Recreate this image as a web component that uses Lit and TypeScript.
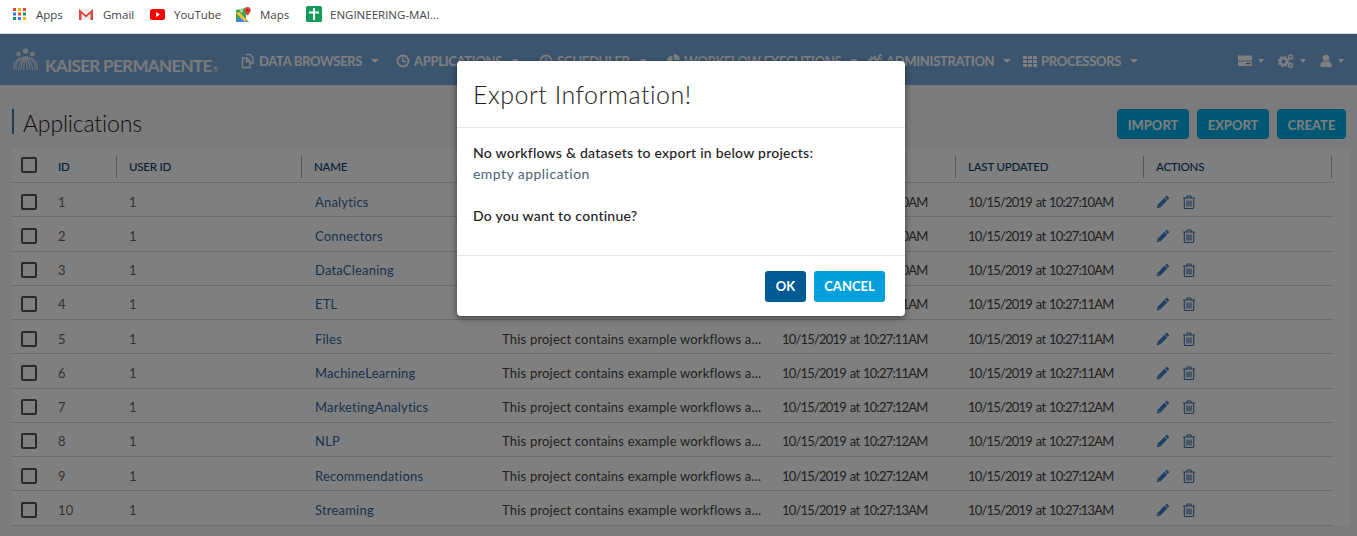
import { LitElement, html, css, svg } from 'lit';
import { customElement } from 'lit/decorators.js';

const caret = html`<span class="caret"></span>`;

const navIcons: Record<string, unknown> = {
  copy: svg`<path d="M5 1.500h4l3 3v6H9M1.500 5h4.500l3 3v6.500H1.500zM5.500 5.500v3h3" fill="none" stroke="currentColor" stroke-width="1.400"/>`,
  clock: svg`<circle cx="7" cy="8" r="5.500" fill="none" stroke="currentColor" stroke-width="1.800"/><path d="M7 4.500v4h3" fill="none" stroke="currentColor" stroke-width="1.500"/>`,
  pie: svg`<path d="M6.500 2.500a6 6 0 1 0 6 6h-6zM8 1a6 6 0 0 1 6 6H8z" fill="currentColor"/>`,
  cogs: svg`<circle cx="5.500" cy="8.500" r="3.400" fill="none" stroke="currentColor" stroke-width="2.400"/><circle cx="5.500" cy="8.500" r="5" fill="none" stroke="currentColor" stroke-width="1.600" stroke-dasharray="2 1.930"/><circle cx="12.700" cy="4" r="1.900" fill="none" stroke="currentColor" stroke-width="1.500"/><circle cx="12.700" cy="12.500" r="1.900" fill="none" stroke="currentColor" stroke-width="1.500"/>`,
  grid: svg`<path d="M0 3h4v3H0zM5 3h4v3H5zM10 3h4v3h-4zM0 7h4v3H0zM5 7h4v3H5zM10 7h4v3h-4zM0 11h4v3H0zM5 11h4v3H5zM10 11h4v3h-4z" fill="currentColor"/>`,
  server: svg`<path d="M0 2.500h14v5H0zM0 8.500h14v4.500H0z" fill="currentColor"/><path d="M8 10.700h4.500" stroke="#3c556f" stroke-width="1"/>`,
  user: svg`<circle cx="6" cy="5" r="3.300" fill="currentColor"/><path d="M.5 14v-2.500c0-2 1.500-3 3-3h5c1.500 0 3 1 3 3V14z" fill="currentColor"/>`,
};

const navItems = [
  { icon: 'copy', label: 'DATA BROWSERS', width: 155 },
  { icon: 'clock', label: 'APPLICATIONS', width: 143 },
  { icon: 'clock', label: 'SCHEDULER', width: 127 },
  { icon: 'pie', label: 'WORKFLOW EXECUTIONS', width: 202 },
  { icon: 'cogs', label: 'ADMINISTRATION', width: 155 },
  { icon: 'grid', label: 'PROCESSORS', width: 112 },
];

const rows = [
  ['1', 'Analytics', '10'],
  ['2', 'Connectors', '10'],
  ['3', 'DataCleaning', '10'],
  ['4', 'ETL', '11'],
  ['5', 'Files', '11'],
  ['6', 'MachineLearning', '11'],
  ['7', 'MarketingAnalytics', '12'],
  ['8', 'NLP', '12'],
  ['9', 'Recommendations', '12'],
  ['10', 'Streaming', '13'],
];

const pencil = html`<svg class="act" viewBox="0 0 14 14" width="14" height="14"><path d="M10.700.6l2.700 2.700-1.600 1.600-2.700-2.700zM8.500 2.800l2.700 2.700-6.900 6.900-3.500 1 .8-3.700z" fill="#3a80c8"/><path d="M1.500 10.300l2.300 2.300" stroke="#b8c8d8" stroke-width="1"/></svg>`;
const trash = html`<svg class="act" viewBox="0 0 14 14" width="14" height="14"><path d="M1 3h12M4.500 3l.8-2h3.400l.8 2M2.300 3v9.200c0 .8.500 1.300 1.200 1.300h7c.7 0 1.200-.5 1.200-1.300V3M5 5.500v6M7 5.500v6M9 5.500v6" fill="none" stroke="#3a70a8" stroke-width="1.100"/></svg>`;

@customElement('app-root')
export class AppRoot extends LitElement {
  static styles = css`
    :host {
      display: block;
      height: 536px;
      overflow: hidden;
      font-family: Lato, "Liberation Sans", sans-serif;
      color: #333;
      background: #fff;
    }
    .bookmarks {
      height: 34px;
      box-sizing: border-box;
      display: flex;
      align-items: center;
      padding: 0 0 5px 13px;
      font: 11.500px "Open Sans", sans-serif;
      color: #444;
      border-bottom: 1px solid #d8d8d8;
      background: #fff;
    }
    .bm {
      display: flex;
      align-items: center;
      gap: 9px;
      flex: none;
    }
    .bm svg { display: block; flex: none; }
    .app {
      position: relative;
      background: #f6f6f6;
      height: 502px;
      overflow: hidden;
    }
    .nav {
      height: 51px;
      display: flex;
      align-items: center;
      background: #78aade;
      color: #fff;
      padding-left: 13px;
      box-sizing: border-box;
    }
    .logo {
      display: flex;
      align-items: center;
      width: 228px;
      flex: none;
      gap: 7px;
      font-size: 17px;
      letter-spacing: -0.650px;
      font-weight: 700;
      color: #f4f4f4;
    }
    .logo span { margin-top: 11px; white-space: nowrap; }
    .logo sup { font-size: 7px; font-weight: 400; vertical-align: baseline; margin-left: 1px; }
    .item {
      display: flex;
      align-items: center;
      flex: none;
      padding-top: 2px;
      box-sizing: border-box;
      font-size: 13px;
      letter-spacing: -0.300px;
      font-weight: 700;
      white-space: nowrap;
    }
    .item svg { margin-right: 4px; flex: none; }
    .caret {
      display: inline-block;
      width: 0;
      height: 0;
      margin-left: 9px;
      border-left: 4px solid transparent;
      border-right: 4px solid transparent;
      border-top: 4px solid currentColor;
    }
    .right {
      margin-left: auto;
      display: flex;
      align-items: center;
      gap: 14px;
      padding: 2px 13px 0 0;
    }
    .right div { display: flex; align-items: center; }
    .right .caret { margin-left: 6px; border-left-width: 3.500px; border-right-width: 3.500px; }
    .head {
      display: flex;
      align-items: flex-start;
      justify-content: space-between;
      padding: 24px 11px 9px 12px;
      height: 30px;
    }
    .title {
      border-left: 2px solid #3a78b8;
      padding-left: 9px;
      height: 25px;
      line-height: 28px;
      font-size: 23px;
      letter-spacing: -0.150px;
      font-weight: 300;
      color: #222;
    }
    .btns { display: flex; gap: 8px; }
    .btn {
      border: 0;
      border-radius: 4px;
      height: 30px;
      padding: 1px 0 0;
      color: #fff;
      background: #00aee8;
      font: 700 13px Lato, sans-serif;
    }
    .panel {
      margin: 0 7px 0 12px;
      background: #fff;
    }
    .tr {
      display: grid;
      grid-template-columns: 105px 185px 188px 280px 186px 188px 188px;
      height: 34.250px;
      padding-top: 4px;
      box-sizing: border-box;
      align-items: center;
      border-bottom: 1px solid #d8d8d8;
      margin-right: 16px;
      font-size: 13px;
      letter-spacing: 0.200px;
      color: #666;
    }
    .tr > div { padding-left: 12px; white-space: nowrap; overflow: hidden; }
    .tr.th {
      height: 35px;
      padding-top: 3px;
      font-size: 11.500px;
      font-weight: 500;
      letter-spacing: -0.200px;
      color: #0c3c6e;
    }
    .tr.th > div {
      height: 22px;
      line-height: 22px;
      border-right: 1px solid #aaa;
      box-sizing: border-box;
    }
    .tr > .cb-cell {
      display: flex;
      align-items: center;
      gap: 21px;
      padding-left: 9px;
      overflow: visible;
    }
    .cb {
      width: 16px;
      height: 16px;
      flex: none;
      border: 2px solid #555;
      border-radius: 2px;
      box-sizing: border-box;
    }
    .th .cb { margin-top: -4px; }
    .tr > .link { color: #336699; padding-left: 13px; }
    .dark { color: #444; }
    .date { letter-spacing: -0.800px; word-spacing: 1.200px; }
    .actions { display: flex; gap: 12px; align-items: center; }
    .act { display: block; }
    .backdrop {
      position: absolute;
      inset: 0;
      background: rgba(0, 0, 0, 0.5);
    }
    .modal {
      position: absolute;
      left: 457px;
      top: 27px;
      width: 448px;
      height: 255px;
      background: #fff;
      border-radius: 4px;
      box-shadow: 0 2px 6px rgba(0, 0, 0, 0.5);
      display: flex;
      flex-direction: column;
    }
    .mhead {
      height: 67px;
      box-sizing: border-box;
      border-bottom: 1px solid #e5e5e5;
      padding: 0 16px;
      display: flex;
      align-items: center;
      font-size: 25px;
      font-weight: 300;
      letter-spacing: 0.500px;
      color: #222;
    }
    .mbody {
      flex: 1;
      padding: 14px 16px 0;
      font-size: 14px;
      color: #222;
    }
    .mbody p { margin: 0; line-height: 21px; }
    .mbody .strong { font-weight: 500; letter-spacing: 0.250px; }
    .mbody .sub { color: #4a5f78; letter-spacing: 0.450px; margin-bottom: 21px; }
    .mfoot {
      height: 61px;
      box-sizing: border-box;
      border-top: 1px solid #e5e5e5;
      display: flex;
      justify-content: flex-end;
      align-items: center;
      gap: 8px;
      padding: 0 20px 0 0;
    }
    .ok, .cancel {
      border: 0;
      border-radius: 3px;
      height: 31px;
      padding: 0;
      color: #fff;
      font: 700 13px Lato, sans-serif;
    }
    .ok { width: 41px; background: #005a94; }
    .cancel { width: 71px; background: #00a0dc; }
  `;

  private bookmarks() {
    return html`
      <div class="bookmarks">
        <div class="bm" style="width:65px">
          <svg width="14" height="14" viewBox="0 0 14 14">
            <path d="M0 1h3v3H0z" fill="#e8453c"/><path d="M5 1h3v3H5z" fill="#f4b400"/><path d="M10 1h3v3h-3z" fill="#e8453c"/>
            <path d="M0 5.500h3v3H0z" fill="#3b78e7"/><path d="M5 5.500h3v3H5z" fill="#e8453c"/><path d="M10 5.500h3v3h-3z" fill="#0f9d58"/>
            <path d="M0 10h3v3H0z" fill="#0f9d58"/><path d="M5 10h3v3H5z" fill="#3b78e7"/><path d="M10 10h3v3h-3z" fill="#f4b400"/>
          </svg>
          <span>Apps</span>
        </div>
        <div class="bm" style="width:72px">
          <svg width="16" height="12" viewBox="0 0 16 12">
            <path d="M1 1h14v11H1z" fill="#eee"/>
            <path d="M1 12V1l7 6 7-6v11h-2.500V5.500L8 9.500 3.500 5.500V12z" fill="#d9463d"/>
          </svg>
          <span>Gmail</span>
        </div>
        <div class="bm" style="width:86px">
          <svg width="15" height="11" viewBox="0 0 15 11">
            <rect width="15" height="11" rx="2.500" fill="#f00"/><path d="M6 3l4 2.500L6 8z" fill="#fff"/>
          </svg>
          <span>YouTube</span>
        </div>
        <div class="bm" style="width:70px">
          <svg width="15" height="15" viewBox="0 0 15 15">
            <path d="M0 3l10-2v14H0z" fill="#34a853"/><path d="M0 15l6-7 7 7z" fill="#4285f4"/><path d="M0 6l3-1 8 8-2 2z" fill="#fbc02d"/>
            <path d="M3 2l4-1v4L5 6z" fill="#a5d6a7"/>
            <path d="M11.500 0a3.200 3.200 0 0 1 3.200 3.200c0 2.300-3.200 5.300-3.200 5.300S8.300 5.500 8.300 3.200A3.200 3.200 0 0 1 11.500 0z" fill="#db4437"/>
            <circle cx="11.500" cy="3.200" r="1.100" fill="#8e2a20"/>
          </svg>
          <span>Maps</span>
        </div>
        <div class="bm" style="gap:8px">
          <svg width="16" height="16" viewBox="0 0 16 16">
            <rect width="16" height="16" rx="1.500" fill="#0f9d58"/><path d="M3 5.500h4V2h2v3.500h4v2H9V14H7V7.500H3z" fill="#fff"/>
          </svg>
          <span>ENGINEERING-MAI...</span>
        </div>
      </div>
    `;
  }

  private nav() {
    return html`
      <div class="nav">
        <div class="logo">
          <svg width="25" height="23" viewBox="0 0 25 23" fill="none" stroke="currentColor" opacity="0.85">
            <circle cx="12.500" cy="3" r="2.800" fill="currentColor" stroke="none"/>
            <circle cx="5.500" cy="6" r="2.300" fill="currentColor" stroke="none"/>
            <circle cx="19.500" cy="6" r="2.300" fill="currentColor" stroke="none"/>
            <path stroke-width="1.100" d="M1 22V15L7 9.500M3 22V16l6-7M5.200 22l1.600-6 4-7.500M7.800 22l1-5 2.700-8.500M10.600 22l.6-6 1.300-8M14.400 22l-.6-6-1.300-8M17.200 22l-1-5-2.700-8.500M19.800 22l-1.600-6-4-7.500M22 22v-6l-6-7M24 22v-7l-6-5.500"/>
          </svg>
          <span>KAISER PERMANENTE<sup>®</sup></span>
        </div>
        ${navItems.map(
          (n) => html`
            <div class="item" style="width:${n.width}px">
              <svg width="14" height="16" viewBox="0 0 14 16">${navIcons[n.icon]}</svg>
              ${n.label}${caret}
            </div>
          `
        )}
        <div class="right">
          <div><svg width="14" height="16" viewBox="0 0 14 16">${navIcons.server}</svg>${caret}</div>
          <div><svg width="16" height="16" viewBox="0 0 16 16">${navIcons.cogs}</svg>${caret}</div>
          <div><svg width="12" height="16" viewBox="0 0 12 16">${navIcons.user}</svg>${caret}</div>
        </div>
      </div>
    `;
  }

  private table() {
    // the two headings behind the dialog can't be read in the screenshot, so those cells stay empty
    return html`
      <div class="panel">
        <div class="tr th">
          <div class="cb-cell"><span class="cb"></span><span>ID</span></div>
          <div>USER ID</div>
          <div>NAME</div>
          <div></div>
          <div></div>
          <div>LAST UPDATED</div>
          <div>ACTIONS</div>
        </div>
        ${rows.map(
          (r) => html`
            <div class="tr">
              <div class="cb-cell"><span class="cb"></span><span>${r[0]}</span></div>
              <div>1</div>
              <div class="link">${r[1]}</div>
              <div class="dark">This project contains example workflows a...</div>
              <div class="dark date">10/15/2019 at 10:27:${r[2]}AM</div>
              <div class="dark date">10/15/2019 at 10:27:${r[2]}AM</div>
              <div class="actions">${pencil}${trash}</div>
            </div>
          `
        )}
      </div>
    `;
  }

  render() {
    return html`
      ${this.bookmarks()}
      <div class="app">
        ${this.nav()}
        <div class="head">
          <div class="title">Applications</div>
          <div class="btns">
            <button class="btn" style="width:72px">IMPORT</button>
            <button class="btn" style="width:72px">EXPORT</button>
            <button class="btn" style="width:69px">CREATE</button>
          </div>
        </div>
        ${this.table()}
        <div class="backdrop"></div>
        <div class="modal">
          <div class="mhead">Export Information!</div>
          <div class="mbody">
            <p class="strong">No workflows &amp; datasets to export in below projects:</p>
            <p class="sub">empty application</p>
            <p class="strong">Do you want to continue?</p>
          </div>
          <div class="mfoot">
            <button class="ok">OK</button>
            <button class="cancel">CANCEL</button>
          </div>
        </div>
      </div>
    `;
  }
}
